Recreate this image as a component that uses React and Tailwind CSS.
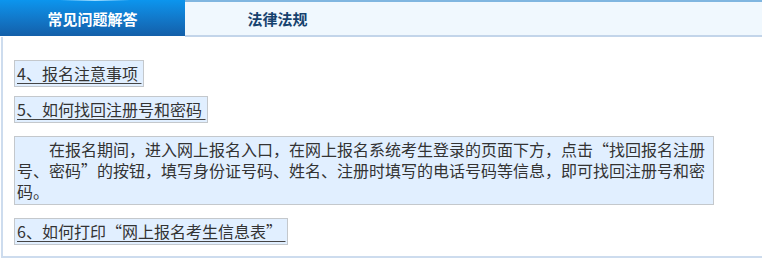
import React from "react";

const faqs = [
  { id: 4, title: "4、报名注意事项 " },
  {
    id: 5,
    title: "5、如何找回注册号和密码 ",
    answer:
      "在报名期间，进入网上报名入口，在网上报名系统考生登录的页面下方，点击“找回报名注册号、密码”的按钮，填写身份证号码、姓名、注册时填写的电话号码等信息，即可找回注册号和密码。",
  },
  { id: 6, title: "6、如何打印“网上报名考生信息表” " },
];

const Tabs = () => (
  <div className="flex h-[37px]">
    <div className="relative w-[185px] h-[36px] bg-gradient-to-b from-[#0b95ee] to-[#135fa9] flex items-center justify-center">
      <div className="absolute top-0 left-[60px] w-[70px] h-[1px] bg-gradient-to-r from-transparent via-[#9fdcff] to-transparent" />
      <span className="text-white font-bold text-[15px] leading-none">常见问题解答</span>
    </div>
    <div className="flex-1 h-[37px] bg-[#f0f8fe] border-t-2 border-t-[#80b6e0] border-b-2 border-b-[#c3d5ea]">
      <div className="w-[185px] h-full flex items-center justify-center">
        <span className="text-[#16426e] font-bold text-[15px] leading-none">法律法规</span>
      </div>
    </div>
  </div>
);

const Title = ({ children, className = "" }) => (
  <div
    className={
      "w-fit h-[27px] bg-[#e1efff] border border-[#c4c8cc] px-[2px] py-[2px] text-[16px] leading-[21px] " +
      className
    }
  >
    <span className="underline underline-offset-[3px] decoration-[#444] text-[#333] whitespace-pre">
      {children}
    </span>
  </div>
);

export default function App() {
  return (
    <div
      className="w-[762px] h-[259px] bg-white overflow-hidden"
      style={{ fontFamily: '"Noto Sans CJK SC", "Noto Sans", sans-serif' }}
    >
      <Tabs />
      <div className="ml-[1px] h-[221px] border-l-2 border-b-2 border-[#cddcee] pl-[11px] pt-[23px]">
        <Title>{faqs[0].title}</Title>
        <Title className="mt-[9px]">{faqs[1].title}</Title>
        <div className="mt-[13px] w-[700px] h-[69px] bg-[#e1efff] border border-[#c4c8cc] px-[2px] py-[2px] text-[#333] text-[16px] leading-[21px] indent-[32px]">
          {faqs[1].answer}
        </div>
        <Title className="mt-[13px]">{faqs[2].title}</Title>
      </div>
    </div>
  );
}
